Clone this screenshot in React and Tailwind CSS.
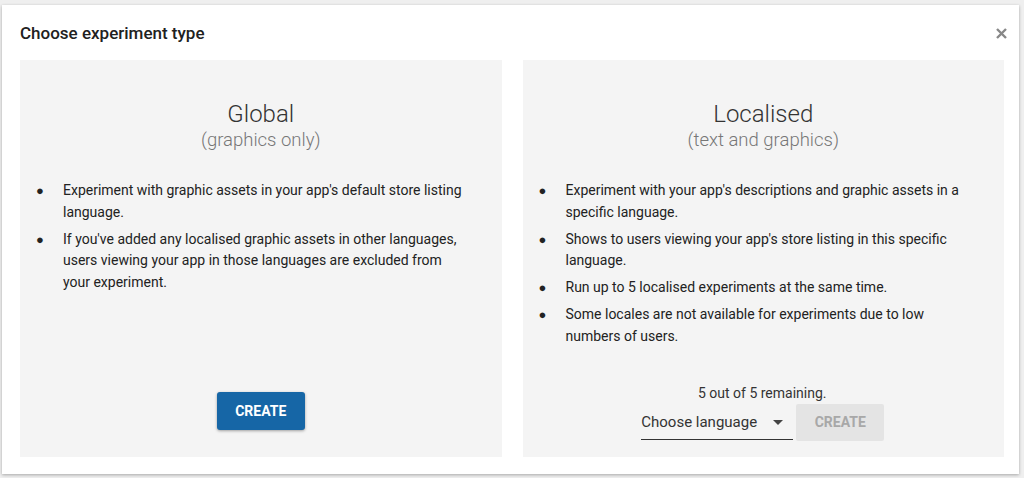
import React from 'react'

const font = { fontFamily: 'Roboto, "Noto Sans", sans-serif' }

const Bullets = ({ items }) => (
  <ul className="flex flex-col gap-[5.5px] pl-[16px] pr-[36px] text-[14px] leading-[21.5px] text-[#222]">
    {items.map((text) => (
      <li key={text} className="flex">
        <span className="w-[27px] shrink-0 text-[13px]">●</span>
        <span>{text}</span>
      </li>
    ))}
  </ul>
)

const PanelHeading = ({ title, sub }) => (
  <div className="pt-[40px] pb-[28px] text-center">
    <div className="text-[24px] leading-[28px] font-light text-[#333]">{title}</div>
    <div className="text-[18.5px] leading-[24px] font-light text-[#777]">{sub}</div>
  </div>
)

export default function App() {
  return (
    <div className="w-[1024px] h-[478px] bg-[#efefef] pt-[5px] pl-[2px]" style={font}>
      <div className="w-[1017px] h-[469px] bg-white shadow-[0_1px_3px_rgba(0,0,0,0.3)] pl-[18px] pr-[15px] flex flex-col">
        <div className="h-[55px] flex items-center justify-between pt-[2px]">
          <h1 className="text-[17px] font-medium text-[#212121]">Choose experiment type</h1>
          <button className="w-[14px] h-[14px] flex items-center justify-center mr-[-4px]">
            <svg width="11" height="11" viewBox="0 0 11 11">
              <path d="M1 1L10 10M10 1L1 10" stroke="#888" strokeWidth="2.4" />
            </svg>
          </button>
        </div>

        <div className="flex gap-[21px] h-[397px]">
          {/* Global */}
          <div className="flex-1 bg-[#f4f4f4] flex flex-col">
            <PanelHeading title="Global" sub="(graphics only)" />
            <Bullets
              items={[
                "Experiment with graphic assets in your app's default store listing language.",
                "If you've added any localised graphic assets in other languages, users viewing your app in those languages are excluded from your experiment.",
              ]}
            />
            <div className="mt-auto mb-[27px] flex justify-center">
              <button className="w-[88px] h-[38px] rounded-[3px] bg-[#1666a6] text-white text-[14px] font-bold shadow-[0_1px_3px_rgba(0,0,0,0.35)]">
                CREATE
              </button>
            </div>
          </div>

          {/* Localised */}
          <div className="flex-1 bg-[#f4f4f4] flex flex-col">
            <PanelHeading title="Localised" sub="(text and graphics)" />
            <Bullets
              items={[
                "Experiment with your app's descriptions and graphic assets in a specific language.",
                "Shows to users viewing your app's store listing in this specific language.",
                "Run up to 5 localised experiments at the same time.",
                "Some locales are not available for experiments due to low numbers of users.",
              ]}
            />
            <div className="mt-auto mb-[17px] flex flex-col items-center">
              <div className="text-[14px] leading-[18px] text-[#333] mb-[1px] ml-[-2px]">5 out of 5 remaining.</div>
              <div className="flex items-end gap-[3px] mr-[1px]">
                <div className="w-[152px] h-[37px] border-b-[1.5px] border-[#333] flex items-center justify-between pr-[10px] pt-[3px]">
                  <span className="text-[15px] text-[#333]">Choose language</span>
                  <svg width="10" height="5" viewBox="0 0 10 5">
                    <path d="M0 0H10L5 5Z" fill="#444" />
                  </svg>
                </div>
                <button className="w-[88px] h-[37px] mb-[-1px] rounded-[2px] bg-[#e4e4e4] text-[#a8a8a8] text-[14px] font-bold">
                  CREATE
                </button>
              </div>
            </div>
          </div>
        </div>
      </div>
    </div>
  )
}
